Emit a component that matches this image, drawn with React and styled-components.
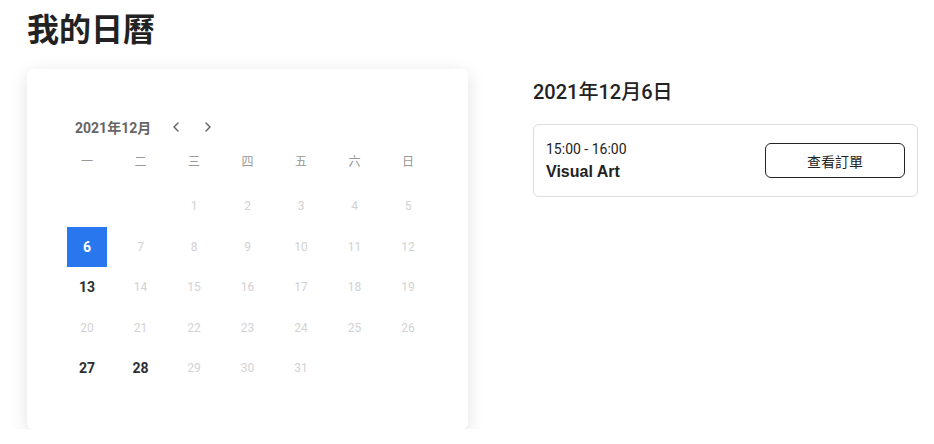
import React, { useState } from 'react'
import styled, { createGlobalStyle } from 'styled-components'
import { ChevronLeft, ChevronRight } from 'lucide-react'

const GlobalStyle = createGlobalStyle`
  body {
    margin: 0;
    background: #fff;
    font-family: Roboto, "Noto Sans CJK TC", sans-serif;
    color: #222;
  }
`

const weekdays = ['一', '二', '三', '四', '五', '六', '日']
const bookedDays = [6, 13, 27, 28]

function buildCells() {
  // Dec 2021 starts on Wednesday (3rd column)
  const cells = [null, null]
  for (let d = 1; d <= 31; d++) cells.push(d)
  return cells
}

function App() {
  const [selected, setSelected] = useState(6)
  const cells = buildCells()

  return (
    <Page>
      <GlobalStyle />
      <Title>我的日曆</Title>
      <Layout>
        <CalendarCard>
          <MonthBar>
            <MonthLabel>2021年12月</MonthLabel>
            <NavButton><ChevronLeft size={16} strokeWidth={2.2} /></NavButton>
            <NavButton><ChevronRight size={16} strokeWidth={2.2} /></NavButton>
          </MonthBar>
          <WeekRow>
            {weekdays.map(w => <WeekDay key={w}>{w}</WeekDay>)}
          </WeekRow>
          <DayGrid>
            {cells.map((d, i) =>
              d === null ? <Day key={'e' + i} /> : (
                <Day
                  key={d}
                  $booked={bookedDays.includes(d)}
                  $active={selected === d}
                  onClick={() => bookedDays.includes(d) && setSelected(d)}
                >
                  {d}
                </Day>
              )
            )}
          </DayGrid>
        </CalendarCard>

        <Agenda>
          <DateHeading>2021年12月{selected}日</DateHeading>
          <EventCard>
            <EventInfo>
              <EventTime>15:00 - 16:00</EventTime>
              <EventName>Visual Art</EventName>
            </EventInfo>
            <OrderButton>查看訂單</OrderButton>
          </EventCard>
        </Agenda>
      </Layout>
    </Page>
  )
}

const Page = styled.div`
  padding: 8px 16px 0 27px;
`

const Title = styled.h1`
  margin: 0 0 23px;
  font-size: 32px;
  line-height: 38px;
  font-weight: 700;
  color: #222;
  font-family: "Noto Sans CJK TC", sans-serif;
`

const Layout = styled.div`
  display: flex;
  align-items: flex-start;
  gap: 65px;
`

const CalendarCard = styled.div`
  width: 441px;
  box-sizing: border-box;
  padding: 48px 40px 40px;
  background: #fff;
  border-radius: 6px;
  box-shadow: 0 4px 18px rgba(0, 0, 0, 0.12);
`

const MonthBar = styled.div`
  display: flex;
  align-items: center;
  height: 20px;
  padding-left: 8px;
  margin-bottom: 3px;
`

const MonthLabel = styled.span`
  font-size: 14px;
  font-weight: 700;
  color: #666;
  margin-right: 17px;
`

const NavButton = styled.button`
  display: flex;
  align-items: center;
  justify-content: center;
  width: 16px;
  height: 20px;
  padding: 0;
  margin-right: 16px;
  border: none;
  background: none;
  color: #666;
  cursor: pointer;
`

const WeekRow = styled.div`
  display: grid;
  grid-template-columns: repeat(7, 40px);
  justify-content: space-between;
  margin-bottom: 6px;
`

const WeekDay = styled.div`
  height: 40px;
  display: flex;
  align-items: center;
  justify-content: center;
  font-size: 12px;
  color: #999;
  font-family: "Noto Sans CJK TC", sans-serif;
`

const DayGrid = styled.div`
  display: grid;
  grid-template-columns: repeat(7, 40px);
  grid-auto-rows: 40.5px;
  justify-content: space-between;
`

const Day = styled.div`
  display: flex;
  align-items: center;
  justify-content: center;
  font-size: ${p => (p.$booked ? '14px' : '12px')};
  font-weight: ${p => (p.$booked ? 700 : 400)};
  color: ${p => (p.$active ? '#fff' : p.$booked ? '#2b2f33' : '#d2d2d2')};
  background: ${p => (p.$active ? '#2877ee' : 'transparent')};
  cursor: ${p => (p.$booked ? 'pointer' : 'default')};
`

const Agenda = styled.div`
  width: 385px;
  padding-top: 11px;
`

const DateHeading = styled.h2`
  margin: 0 0 20px;
  font-size: 20px;
  line-height: 24px;
  font-weight: 500;
  color: #222;
`

const EventCard = styled.div`
  height: 73px;
  box-sizing: border-box;
  display: flex;
  align-items: center;
  justify-content: space-between;
  padding: 0 12px;
  border: 1px solid #ddd;
  border-radius: 6px;
`

const EventInfo = styled.div`
  display: flex;
  flex-direction: column;
  gap: 4px;
`

const EventTime = styled.span`
  font-size: 14px;
  line-height: 17px;
  color: #222;
`

const EventName = styled.span`
  font-family: "Liberation Sans", Arial, sans-serif;
  font-size: 16px;
  line-height: 19px;
  font-weight: 700;
  color: #222;
`

const OrderButton = styled.button`
  width: 140px;
  height: 35px;
  border: 1px solid #222;
  border-radius: 6px;
  background: #fff;
  font-size: 14px;
  color: #222;
  font-family: "Noto Sans CJK TC", sans-serif;
  cursor: pointer;
`

export default App
